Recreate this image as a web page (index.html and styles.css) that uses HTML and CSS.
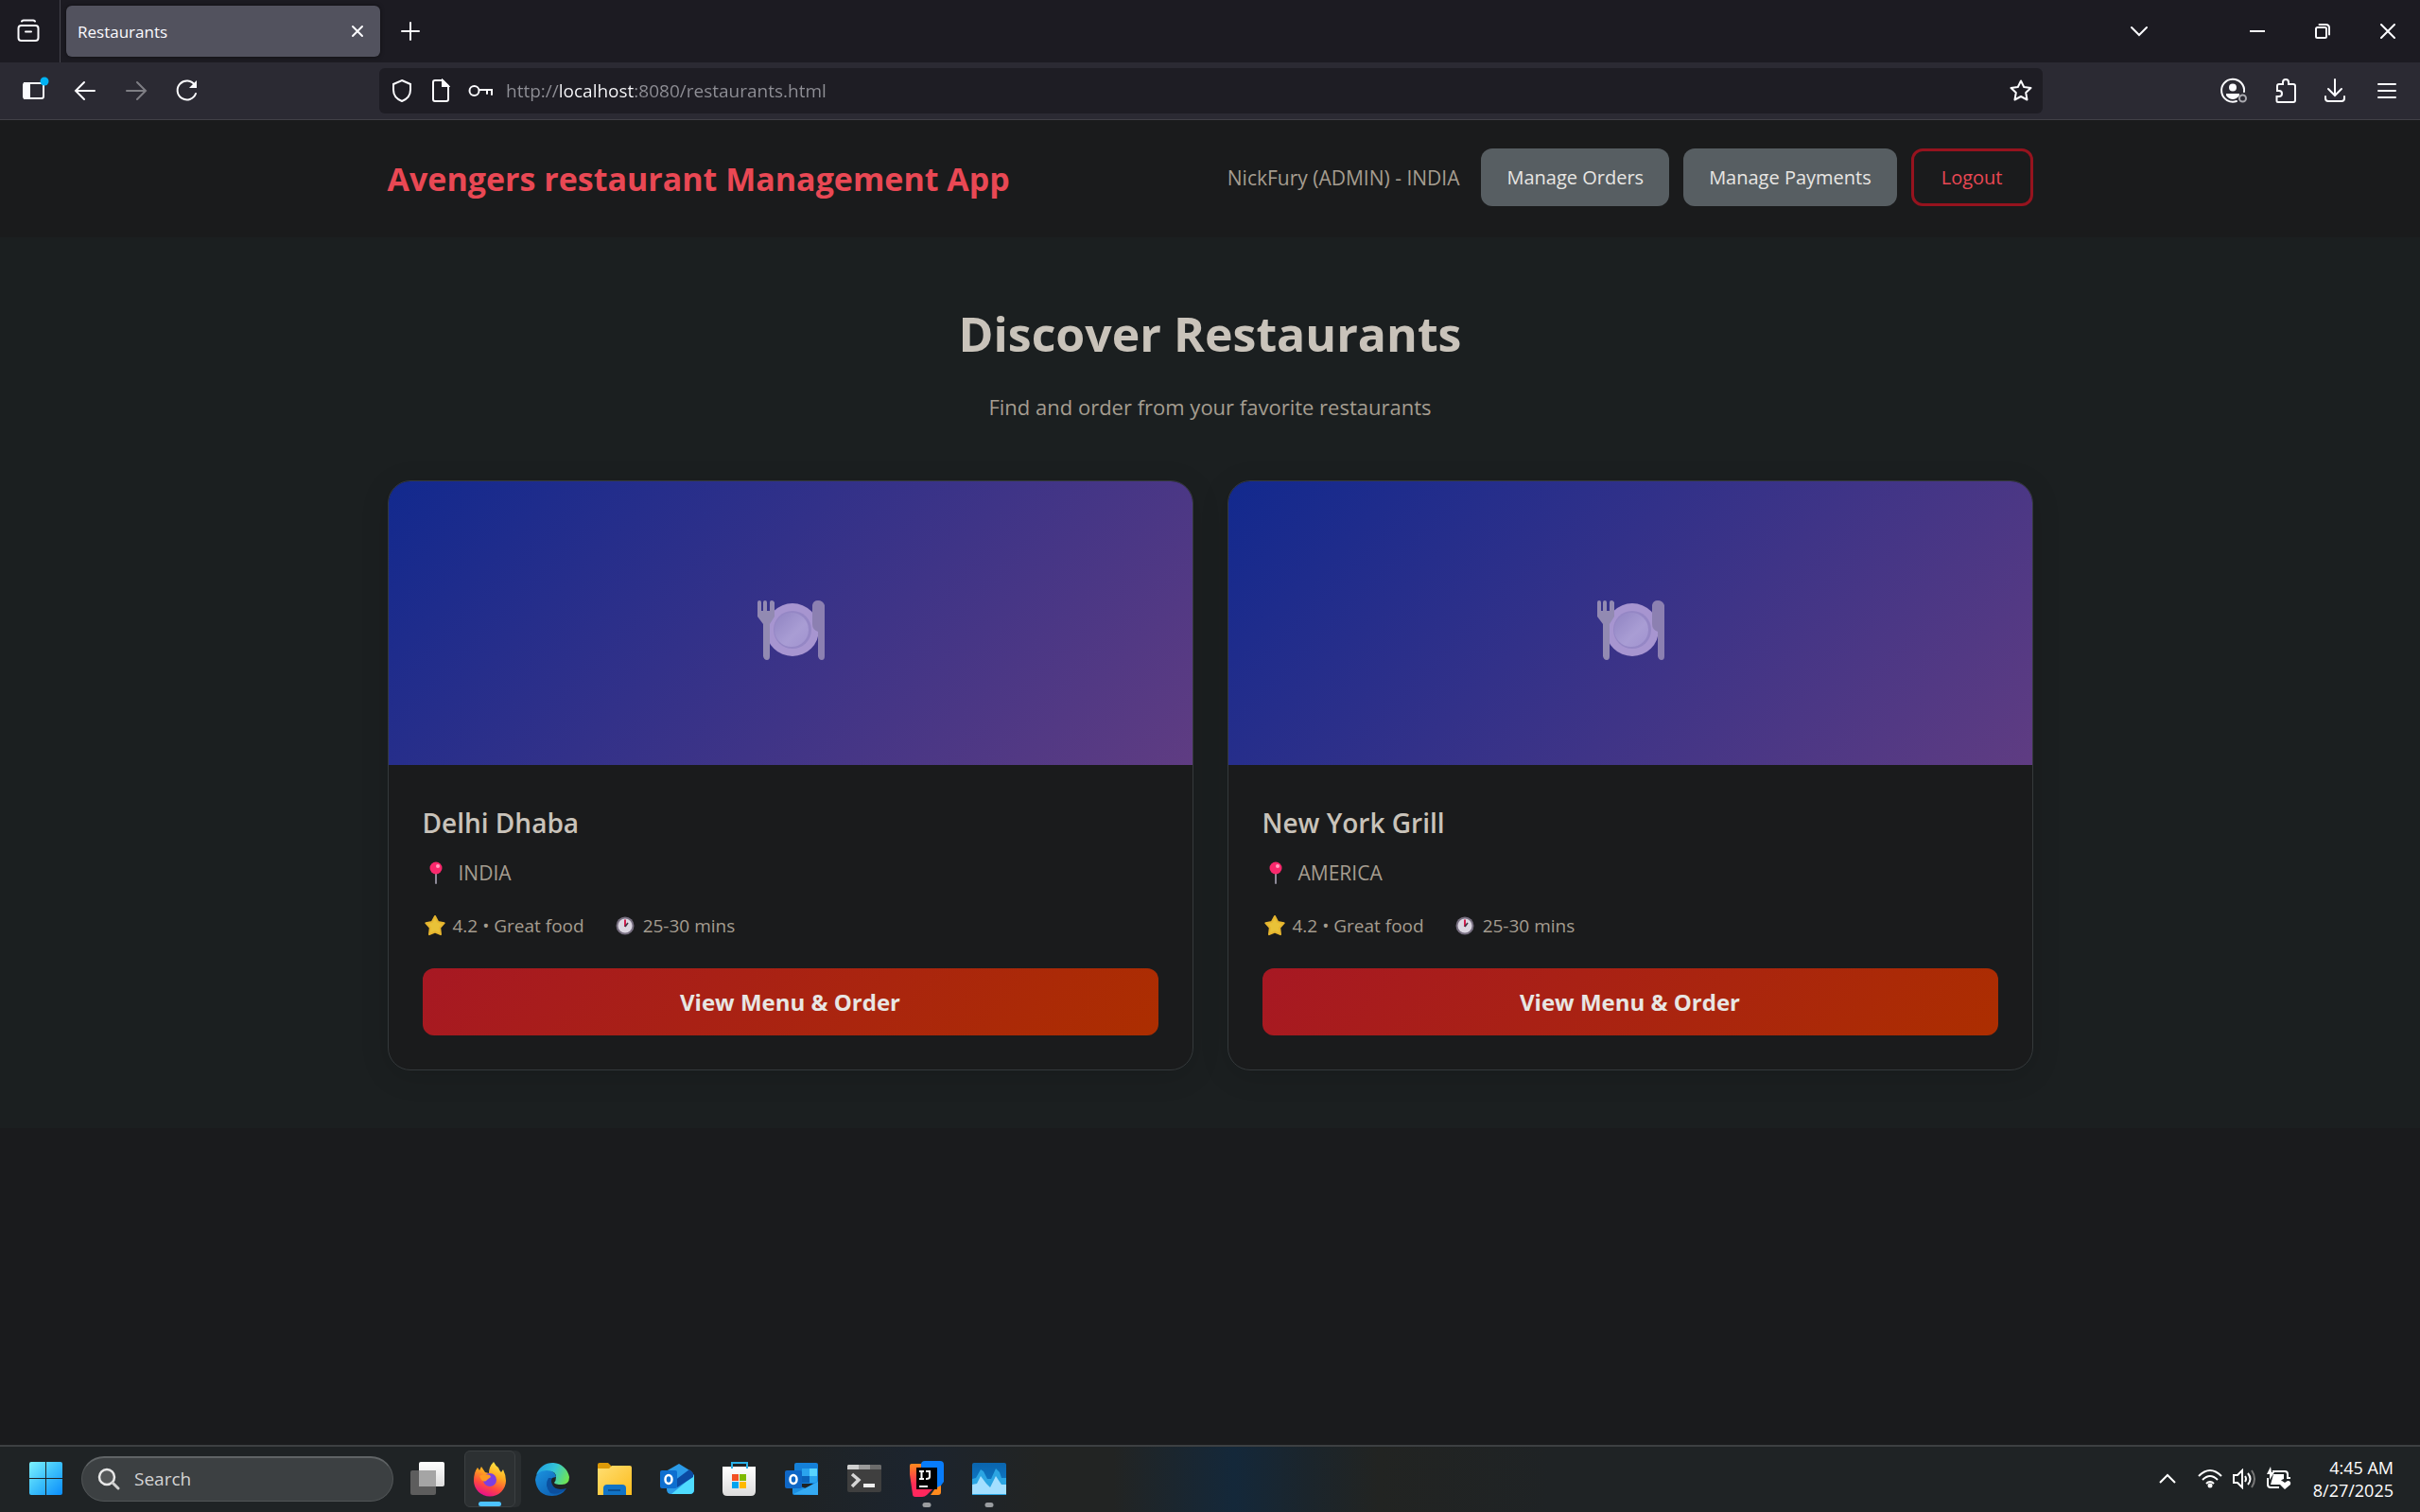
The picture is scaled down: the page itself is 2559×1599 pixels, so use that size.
FILE: index.html
```html
<!DOCTYPE html>
<html lang="en">
<head>
<meta charset="utf-8">
<title>Restaurants</title>
<link rel="stylesheet" href="styles.css">
</head>
<body>
<svg class="defs" width="0" height="0" aria-hidden="true">
  <defs>
    <linearGradient id="g-win" x1="0" y1="0" x2="1" y2="1"><stop offset="0" stop-color="#7df3ff"/><stop offset=".5" stop-color="#3cc0fb"/><stop offset="1" stop-color="#0a8dfb"/></linearGradient>
    <linearGradient id="g-fox" x1=".8" y1="0" x2=".4" y2="1"><stop offset="0" stop-color="#fff04a"/><stop offset=".4" stop-color="#ffa81f"/><stop offset=".72" stop-color="#ff4a3d"/><stop offset="1" stop-color="#e8108a"/></linearGradient>
    <linearGradient id="g-edge" x1="0" y1=".3" x2="1" y2=".6"><stop offset="0" stop-color="#1f9fe0"/><stop offset=".5" stop-color="#33c3d8"/><stop offset="1" stop-color="#6fe553"/></linearGradient>
    <linearGradient id="g-edge2" x1="0" y1="0" x2="1" y2="1"><stop offset="0" stop-color="#1b93e0"/><stop offset="1" stop-color="#0b55a8"/></linearGradient>
    <linearGradient id="g-folder" x1="0" y1="0" x2="1" y2="1"><stop offset="0" stop-color="#ffdf73"/><stop offset="1" stop-color="#fcbc1e"/></linearGradient>
    <linearGradient id="g-ij" x1="0" y1="0" x2="0" y2="1"><stop offset="0" stop-color="#ff8a1d"/><stop offset=".6" stop-color="#ff2d55"/><stop offset="1" stop-color="#ff2560"/></linearGradient>
    <linearGradient id="g-mon" x1="0" y1="0" x2="0" y2="1"><stop offset="0" stop-color="#0a64ad"/><stop offset="1" stop-color="#1183d1"/></linearGradient>
    <linearGradient id="g-plate" x1="0" y1="0" x2="1" y2="1"><stop offset="0" stop-color="#9084c2"/><stop offset=".6" stop-color="#a99dd4"/><stop offset="1" stop-color="#a193cf"/></linearGradient>
    <linearGradient id="g-white" x1="0" y1="0" x2="0" y2="1"><stop offset="0" stop-color="#ffffff"/><stop offset="1" stop-color="#dcdcdc"/></linearGradient>
    <symbol id="i-dish" viewBox="0 0 72 66">
      <circle cx="38" cy="32" r="28" fill="#a795d0"/>
      <circle cx="38" cy="32" r="20" fill="#9587c5"/>
      <circle cx="37" cy="32" r="18" fill="url(#g-plate)"/>
      <path d="M1 3q0-2 2-2t2 2v9h2V3q0-2 2-2t2 2v9h3V3q0-2 2-2t3 2v15l-5 8v34q0 4-3 4t-4-4V26l-6-8z" fill="#928ab2"/>
      <path d="M59 6q1-5 6-5t7 5v54q0 4-3 4t-4-4V34q-6-2-6-8z" fill="#8c80b1"/>
    </symbol>
    <symbol id="i-pin" viewBox="0 0 26 26">
      <path d="M14 12v12" stroke="#8d8a98" stroke-width="2" stroke-linecap="round"/>
      <circle cx="14" cy="8" r="6.500" fill="#f9286c"/><circle cx="16" cy="6" r="2" fill="#ff9fbf"/>
    </symbol>
    <symbol id="i-star" viewBox="0 0 26 26">
      <path d="M13 3l3.200 6 6.500 1.200-4.500 5 .8 7-6-2.700-6 2.700.8-7-4.500-5L9.800 9z" fill="#e9c238" stroke="#e6b52e" stroke-width="2" stroke-linejoin="round"/>
    </symbol>
    <symbol id="i-clock" viewBox="0 0 26 26">
      <circle cx="13" cy="13" r="9.500" fill="#776f80"/><circle cx="13" cy="13" r="7.500" fill="#dcd7e2"/>
      <path d="M13 14V6.500" stroke="#d2204f" stroke-width="2"/><path d="M13 14l3-4" stroke="#3b3542" stroke-width="1.500"/>
    </symbol>
  </defs>
</svg>

<header class="browser">
  <div class="tabbar">
    <button class="icon-btn view-btn" aria-label="Firefox View"><svg width="26" height="26" viewBox="0 0 26 26"><path d="M6 2.500q1-1 2-1h10q1 0 2 1M2.500 10a3 3 0 0 1 3-3h15a3 3 0 0 1 3 3v10a3 3 0 0 1-3 3h-15a3 3 0 0 1-3-3zM10 13.500h6"/></svg></button>
    <div class="tab"><span class="tab-title">Restaurants</span><button class="icon-btn close-tab" aria-label="Close tab"><svg width="14" height="14" viewBox="0 0 14 14"><path d="M2 2l10 10M12 2L2 12"/></svg></button></div>
    <button class="icon-btn new-tab" aria-label="New tab"><svg width="20" height="20" viewBox="0 0 20 20"><path d="M10 1v18M1 10h18"/></svg></button>
    <div class="window-controls">
      <button class="icon-btn list-tabs" aria-label="List all tabs"><svg width="20" height="20" viewBox="0 0 20 20"><path d="M2 6l8 8 8-8"/></svg></button>
      <button class="icon-btn wc" aria-label="Minimize"><svg width="16" height="16" viewBox="0 0 16 16"><path d="M0 8h16"/></svg></button>
      <button class="icon-btn wc" aria-label="Restore"><svg width="16" height="16" viewBox="0 0 16 16"><path d="M1 5.500a1.500 1.500 0 0 1 1.500-1.500h8a1.500 1.500 0 0 1 1.500 1.500v8a1.500 1.500 0 0 1-1.500 1.500h-8A1.500 1.500 0 0 1 1 13.500zM4.500 1h7q3.500 0 3.500 3.500v7"/></svg></button>
      <button class="icon-btn wc" aria-label="Close"><svg width="16" height="16" viewBox="0 0 16 16"><path d="M1 1l14 14M15 1L1 15"/></svg></button>
    </div>
  </div>
  <div class="toolbar">
    <div class="nav-btns">
      <button class="icon-btn" aria-label="Show sidebar"><svg class="spill" width="27" height="30" viewBox="0 0 27 30"><rect x="4" y="7" width="21" height="16" rx="2"/><path d="M5 7h5v16H5z" fill="#fbfbfe"/><circle cx="26" cy="5" r="4.500" fill="#00b3f4" stroke="none"/></svg></button>
      <button class="icon-btn" aria-label="Back"><svg width="24" height="24" viewBox="0 0 24 24"><path d="M22 12H2M11 3l-9 9 9 9"/></svg></button>
      <button class="icon-btn dim" aria-label="Forward"><svg width="24" height="24" viewBox="0 0 24 24"><path d="M2 12h20M13 3l9 9-9 9"/></svg></button>
      <button class="icon-btn" aria-label="Reload"><svg width="24" height="24" viewBox="0 0 24 24"><path d="M21 15A10 10 0 1 1 20 6"/><path d="M22 1v8h-8z" fill="#fbfbfe" stroke="none"/></svg></button>
    </div>
    <div class="urlbar">
      <div class="url-icons">
        <svg width="24" height="26" viewBox="0 0 24 26"><path d="M12 2l9 4v6c0 6-4 10-9 12-5-2-9-6-9-12V6z"/></svg>
        <svg width="20" height="26" viewBox="0 0 20 26"><path d="M4 2h8l6 6v14a2 2 0 0 1-2 2H4a2 2 0 0 1-2-2V4a2 2 0 0 1 2-2z"/><path d="M12 2v6h6z" fill="#fbfbfe"/></svg>
        <svg width="26" height="26" viewBox="0 0 26 26"><circle cx="6.500" cy="13" r="5"/><path d="M12 12h13v5M20 12v4"/></svg>
      </div>
      <input class="url" type="text" aria-label="Address" value="http://localhost:8080/restaurants.html">
      <button class="icon-btn bookmark" aria-label="Bookmark this page"><svg width="26" height="26" viewBox="0 0 26 26"><path d="M13 2.500l3.200 6.500 7.300 1-5.300 5 1.300 7.500-6.500-3.500-6.500 3.500 1.300-7.500-5.300-5 7.300-1z" stroke-linejoin="round"/></svg></button>
    </div>
    <div class="tool-btns">
      <button class="icon-btn" aria-label="Account"><svg width="30" height="28" viewBox="0 0 30 28"><path d="M26 15a12 12 0 1 0-8 10"/><circle cx="14" cy="10.500" r="4" fill="#fbfbfe" stroke="none"/><path d="M7 17h14v2q-3 4-7 4t-7-4z" fill="#fbfbfe" stroke="none"/><circle cx="24.500" cy="22" r="3.500" stroke="#aaaab0"/></svg></button>
      <button class="icon-btn" aria-label="Extensions"><svg width="26" height="28" viewBox="0 0 26 28"><path d="M4 14V9a2 2 0 0 1 2-2h4V5a2.800 2.800 0 0 1 6 0v2h5a2 2 0 0 1 2 2v15a2 2 0 0 1-2 2H5a1.500 1.500 0 0 1-1.500-1.500V20H6a3 3 0 0 0 0-6z"/></svg></button>
      <button class="icon-btn" aria-label="Downloads"><svg width="24" height="28" viewBox="0 0 24 28"><path d="M12 2v16M5 12l7 7 7-7M2 20v2a3 3 0 0 0 3 3h14a3 3 0 0 0 3-3v-2"/></svg></button>
      <button class="icon-btn menu-btn" aria-label="Menu"><svg width="20" height="20" viewBox="0 0 20 20"><path d="M1 3h18M1 10h18M1 17h18"/></svg></button>
    </div>
  </div>
</header>

<div class="page">
  <header class="site-header">
    <div class="container header-row">
      <h2 class="brand">Avengers restaurant Management App</h2>
      <div class="actions">
        <span class="user">NickFury (ADMIN) - INDIA</span>
        <button class="btn">Manage Orders</button>
        <button class="btn">Manage Payments</button>
        <button class="btn btn-logout">Logout</button>
      </div>
    </div>
  </header>
  <main class="main">
    <div class="container">
      <h1 class="hero-title">Discover Restaurants</h1>
      <p class="hero-sub">Find and order from your favorite restaurants</p>
      <div class="cards">
        <article class="card">
          <div class="card-image"><svg width="72" height="66"><use href="#i-dish"/></svg></div>
          <div class="card-body">
            <h3 class="card-title">Delhi Dhaba</h3>
            <p class="location"><svg width="26" height="26"><use href="#i-pin"/></svg><span>INDIA</span></p>
            <div class="meta">
              <span class="meta-item"><svg width="26" height="26"><use href="#i-star"/></svg><span>4.2 • Great food</span></span>
              <span class="meta-item"><svg width="26" height="26"><use href="#i-clock"/></svg><span>25-30 mins</span></span>
            </div>
            <button class="order-btn">View Menu &amp; Order</button>
          </div>
        </article>
        <article class="card">
          <div class="card-image"><svg width="72" height="66"><use href="#i-dish"/></svg></div>
          <div class="card-body">
            <h3 class="card-title">New York Grill</h3>
            <p class="location"><svg width="26" height="26"><use href="#i-pin"/></svg><span>AMERICA</span></p>
            <div class="meta">
              <span class="meta-item"><svg width="26" height="26"><use href="#i-star"/></svg><span>4.2 • Great food</span></span>
              <span class="meta-item"><svg width="26" height="26"><use href="#i-clock"/></svg><span>25-30 mins</span></span>
            </div>
            <button class="order-btn">View Menu &amp; Order</button>
          </div>
        </article>
      </div>
    </div>
  </main>
</div>

<footer class="taskbar">
  <button class="task start" aria-label="Start"><svg width="36" height="36" viewBox="0 0 36 36"><path d="M2 0h15v17H0V2a2 2 0 0 1 2-2zM18 0h15a2 2 0 0 1 2 2v15H18zM0 18h17v17H2a2 2 0 0 1-2-2zM18 18h17v15a2 2 0 0 1-2 2H18z" fill="url(#g-win)"/></svg></button>
  <label class="search">
    <svg width="24" height="24" viewBox="0 0 24 24"><circle cx="10" cy="10" r="8" fill="#555859" stroke="#e8e8e8" stroke-width="2.500"/><path d="M16 16l6 6" stroke="#d0d0d0" stroke-width="3" stroke-linecap="round"/></svg>
    <input type="text" placeholder="Search" aria-label="Search">
  </label>
  <nav class="apps">
    <button class="task" aria-label="Task view"><svg width="36" height="36" viewBox="0 0 36 36"><rect x="9" y="0" width="27" height="26" rx="2" fill="url(#g-white)"/><rect x="0" y="9" width="27" height="26" rx="2" fill="#5d5d5d"/><path d="M9 9h18v17H9z" fill="#a5a5a5"/></svg></button>
    <button class="task active" aria-label="Firefox"><svg width="36" height="38" viewBox="0 0 36 38"><path d="M22 1q2 4 5 6 1 3 3 5l2-3q3 6 3 12A17 16.500 0 0 1 1 21q0-9 4-14l2 3 2-4 4 6 4 1q0-7 5-12z" fill="url(#g-fox)"/><circle cx="18" cy="20" r="7" fill="#7d3fe0"/><path d="M7 16q5-3 11-1l1 2-4 3q-2 3-6 0z" fill="#ff9a22"/></svg><span class="indicator on"></span></button>
    <button class="task" aria-label="Edge"><svg width="36" height="38" viewBox="0 0 36 38"><path d="M1 15A18 18 0 0 1 36 17q0 8-8 8-7 0-8-2 2-2 2-6 0-6-7-6Q6 11 1 15z" fill="url(#g-edge)"/><path d="M0 20q1-10 12-10 9 0 10 7-8 1-8 7 2 9 12 8 4 0 7-3-5 8-15 8Q2 37 0 20z" fill="url(#g-edge2)"/><path d="M14 18q-5 8 2 16 8 3 17-5-12 3-15-4-2-4 0-7z" fill="#0b4f9e"/></svg></button>
    <button class="task" aria-label="File Explorer"><svg width="36" height="36" viewBox="0 0 36 36"><path d="M0 3a2 2 0 0 1 2-2h9l4 4v4H0z" fill="#dd9a08"/><path d="M0 7h12l3-3h19a2 2 0 0 1 2 2v29H0z" fill="url(#g-folder)"/><path d="M6 35V28a4 4 0 0 1 4-4h16a4 4 0 0 1 4 4v7z" fill="#1173c6"/><path d="M11 30h13" stroke="#0a4f92" stroke-width="2"/></svg></button>
    <button class="task" aria-label="Outlook"><svg width="36" height="36" viewBox="0 0 36 36"><path d="M6 10L20 2l13 8 3 4v16q0 4-5 4H12q-5 0-5-5z" fill="#2b9be8"/><path d="M36 14v15q0 5-5 5H12z" fill="#4fdcff"/><path d="M15 20L31 8l4 4v4L18 27z" fill="#0b4ba3"/><rect x="0" y="9" width="18" height="19" rx="2" fill="#0e6fd0"/><ellipse cx="9" cy="18.500" rx="3.500" ry="4.500" fill="none" stroke="#fff" stroke-width="2.500"/></svg></button>
    <button class="task" aria-label="Microsoft Store"><svg width="36" height="38" viewBox="0 0 36 38"><path d="M10 8V2h16v6" fill="none" stroke="#28b1e8" stroke-width="2"/><path d="M0 6h35v26q0 5-5 5H5q-5 0-5-5z" fill="url(#g-white)"/><path d="M10 8V2M26 8V2" stroke="#28b1e8" stroke-width="2"/><path d="M10 14h7v7h-7z" fill="#f25022"/><path d="M18 14h7v7h-7z" fill="#7fba00"/><path d="M10 22h7v7h-7z" fill="#00a4ef"/><path d="M18 22h7v7h-7z" fill="#ffb900"/></svg></button>
    <button class="task" aria-label="Outlook classic"><svg width="36" height="36" viewBox="0 0 36 36"><path d="M10 3q0-2 2-2h21q2 0 2 2v20H10z" fill="#1480d8"/><path d="M18 7h8v8h-8z" fill="#2aa4ee"/><path d="M26 7h8v8h-8z" fill="#58d4ff"/><path d="M18 15h8v7h-8z" fill="#0a62b8"/><path d="M26 15h8v7h-8z" fill="#2aa4ee"/><path d="M8 23l14 5 13-8v15H10q-2 0-2-2z" fill="#1b8fe2"/><path d="M9 34l26-13v14z" fill="#35aaf2"/><rect x="0" y="9" width="18" height="19" rx="2" fill="#0f67c6"/><ellipse cx="9" cy="18.500" rx="3.500" ry="4.500" fill="none" stroke="#fff" stroke-width="2.500"/></svg></button>
    <button class="task" aria-label="Terminal"><svg width="36" height="30" viewBox="0 0 36 30"><rect width="36" height="29" rx="2" fill="#3f3f3f"/><path d="M1 0h11v5H0V1z" fill="#cfcfcf"/><path d="M12 0h12v5H12z" fill="#9a9a9a"/><path d="M24 0h11l1 1v4H24z" fill="#6b6b6b"/><path d="M5 10l7 6-7 7" fill="none" stroke="#d6d6d6" stroke-width="3.500"/><path d="M17 20h12v4H17z" fill="#f0f0f0"/></svg></button>
    <button class="task" aria-label="IntelliJ IDEA"><svg width="36" height="38" viewBox="0 0 36 38"><path d="M12 4q0-4 4-4h16q4 0 4 4v18l-6 8H14z" fill="#087cfa"/><path d="M22 36h8q3 0 3-3v-7l-6 3z" fill="#ff8a1d"/><path d="M0 5q0-2 2-2h10v27h12l-6 6q-2 2-5 2H6q-3 0-3-3L0 14z" fill="url(#g-ij)"/><path d="M7 7h22v23H7z"/><path d="M10 11h5M12.500 11v8M10 19h5M17 11h4v6q0 2-4 2M10 27h9" fill="none" stroke="#fff" stroke-width="2"/></svg><span class="indicator"></span></button>
    <button class="task" aria-label="Performance monitor"><svg width="36" height="34" viewBox="0 0 36 34"><rect width="36" height="34" rx="2" fill="url(#g-mon)"/><path d="M0 17l4-1 5-9 3 2 4 8h4l5-11 4 4 2 6h5v18H0z" fill="#2ba5e2"/><path d="M0 23l5-1 4-8 3 4 3 4 4 4 6-12 4 6 2 3h5v10H0z" fill="#a3dfff"/></svg><span class="indicator"></span></button>
  </nav>
  <div class="tray">
    <svg width="20" height="20" viewBox="0 0 20 20"><path d="M2 14l8-8 8 8"/></svg>
    <div class="tray-icons">
      <svg width="26" height="22" viewBox="0 0 26 22"><path d="M1 8q12-12 24 0M5 12q8-8 16 0M9 16q4-4 8 0"/><circle cx="13" cy="18" r="2.500" fill="#fff" stroke="none"/></svg>
      <svg width="26" height="22" viewBox="0 0 26 22"><path d="M2 7h4l5-5v18l-5-5H2zM14 8q2 3 0 6M17 5q5 6 0 12"/><path d="M21 2q6 9 0 18" stroke="#777"/></svg>
      <svg width="28" height="26" viewBox="0 0 28 26"><path d="M7 5h13q3 0 3 3v4h3M2 12v7q0 3 3 3h9"/><path d="M8 8h11v5q-4 1-4 6H5zM5 0L1 8h3v6l5-8H6zM20 24l-5-5q-1-4 2-4l3 2 3-2q4 0 3 4z" fill="#fff" stroke="none"/></svg>
    </div>
    <div class="clock"><span>4:45 AM</span><span>8/27/2025</span></div>
  </div>
</footer>
</body>
</html>
```
FILE: styles.css
```css
* { box-sizing: border-box; }
body {
  margin: 0;
  min-height: 100vh;
  display: flex;
  flex-direction: column;
  background: #1a1b1d;
  color: #c9c3ba;
  font-family: "Open Sans", "Noto Sans", sans-serif;
  font-size: 21px;
}
button, input { font: inherit; color: inherit; border: 0; padding: 0; background: none; }
h1, h2, h3, p { margin: 0; }
svg { display: block; flex: none; }
.defs { position: absolute; }

.browser { color: #fbfbfe; border-bottom: 1px solid #414147; }
.browser svg { fill: none; stroke: #fbfbfe; stroke-width: 2; stroke-linecap: round; }
.browser .spill { overflow: visible; }
.icon-btn { display: flex; align-items: center; justify-content: center; flex: none; }
.dim { opacity: .4; }
.tabbar { height: 66px; display: flex; align-items: center; background: #1c1b22; }
.view-btn { width: 64px; height: 66px; padding-right: 4px; border-right: 1px solid #45444c; }
.tab {
  width: 332px; height: 54px; margin-left: 6px; padding: 0 17px 0 12px;
  display: flex; align-items: center; justify-content: space-between;
  background: #52525e; border-radius: 6px; font-size: 17px;
  box-shadow: 0 0 4px #00000080;
}
.new-tab { width: 64px; height: 54px; }
.window-controls { margin-left: auto; display: flex; align-items: center; }
.list-tabs { width: 56px; margin-right: 62px; }
.wc { width: 69px; height: 60px; }
.toolbar { height: 60px; display: flex; align-items: center; background: #2b2a33; }
.nav-btns { flex: none; width: 401px; padding-left: 21px; display: flex; gap: 30px; align-items: center; }
.urlbar {
  flex: 1; height: 48px; padding: 0 10px 0 12px;
  display: flex; align-items: center; gap: 14px;
  background: #1e1d24; border-radius: 6px;
}
.url-icons { flex: none; display: flex; align-items: center; gap: 19px; }
.url {
  flex: 1; min-width: 0; height: 48px; outline: 0;
  background: linear-gradient(90deg, #8f8f96 0 56px, #fbfbfe 56px 135px, #8f8f96 135px);
  -webkit-background-clip: text; background-clip: text;
  color: transparent; font-size: 19px;
}
.tool-btns { flex: none; width: 399px; padding-right: 25px; display: flex; justify-content: flex-end; align-items: center; gap: 27px; }
.menu-btn { margin-left: 6px; }

.page { flex: 1; }
.container { max-width: 1800px; margin: 0 auto; padding: 0 30px; }
.site-header { padding: 30px 0; background: #1a1b1c; }
.header-row { display: flex; align-items: flex-start; justify-content: space-between; }
.brand { color: #e94854; font-size: 34px; line-height: 64px; font-weight: 700; }
.actions { display: flex; align-items: center; gap: 15px; }
.user { color: #a59d90; margin-right: 8px; }
.btn {
  height: 61px; padding: 0 27px; border-radius: 12px;
  background: #575e62; color: #e8e6e3; font-size: 20px; font-weight: 500;
}
.btn-logout { padding: 0 29px; border: 3px solid #96131e; background: none; color: #e94854; }
.main { background: #1b1f20; padding: 62px 0 61px; }
.hero-title { font-size: 50px; line-height: 80px; font-weight: 700; text-align: center; }
.hero-sub { margin: 19px 0 60px; font-size: 22px; line-height: 36px; text-align: center; color: #a59d90; }
.cards { display: grid; grid-template-columns: 1fr 1fr; gap: 36px; }
.card { border: 1px solid #34393b; border-radius: 24px; overflow: hidden; background: #1a1b1c; box-shadow: 0 6px 30px #00000020; }
.card-image { height: 300px; display: flex; align-items: center; justify-content: center; background: linear-gradient(135deg, #12298e, #5f3c82); }
.card-image svg { margin-top: 16px; }
.card-body { padding: 36px; }
.card-title { font-size: 28px; line-height: 50px; font-weight: 600; }
.location { display: flex; align-items: center; gap: 12px; margin-top: 10px; line-height: 36px; color: #a59d90; }
.meta { display: flex; gap: 30px; margin: 22px 0 29px; font-size: 19px; line-height: 32px; color: #a59d90; }
.meta-item { display: flex; align-items: center; gap: 6px; }
.order-btn {
  width: 100%; height: 71px; border-radius: 12px;
  background: linear-gradient(135deg, #a71823, #ac2e00);
  color: #e8e6e3; font-size: 24px; font-weight: 700;
}

.taskbar {
  height: 71px; padding-bottom: 2px; border-top: 2px solid #3d4042; display: flex; align-items: center; color: #fff;
  background: linear-gradient(90deg, #1f2325 33%, #1c242e 38%, #222423 43%, #222423 46%, #14283a 51%, #1b252c 54%, #222422 57%, #1f2325 64%);
}
.task { position: relative; width: 54px; height: 60px; margin: 0 6px; display: flex; align-items: center; justify-content: center; border-radius: 6px; }
.start { margin: 0 10px 0 22px; }
.active { background: #2c3032; border: 1px solid #3b3f41; box-shadow: 6px 0 0 #2a2e30; }
.indicator { position: absolute; bottom: 0; left: 50%; translate: -50%; width: 9px; height: 5px; border-radius: 3px; background: #9a9da0; }
.on { width: 24px; background: #4cc2ff; }
.search {
  width: 330px; height: 48px; padding: 0 16px; border-radius: 24px; display: flex; align-items: center; gap: 15px;
  background: #3c4042; border: 1px solid #505456; border-top: 2px solid #606466;
}
.search svg { fill: none; }
.search input { width: 200px; outline: 0; font-size: 19px; }
.search input::placeholder { color: #d4d4d4; opacity: 1; }
.apps { display: flex; margin-left: 3px; }
.tray { margin-left: auto; padding-right: 28px; display: flex; align-items: center; gap: 22px; }
.tray svg { fill: none; stroke: #fff; stroke-width: 2; }
.tray-icons { display: flex; align-items: center; gap: 10px; }
.clock { display: flex; flex-direction: column; align-items: flex-end; font-size: 18px; line-height: 24px; }
```
